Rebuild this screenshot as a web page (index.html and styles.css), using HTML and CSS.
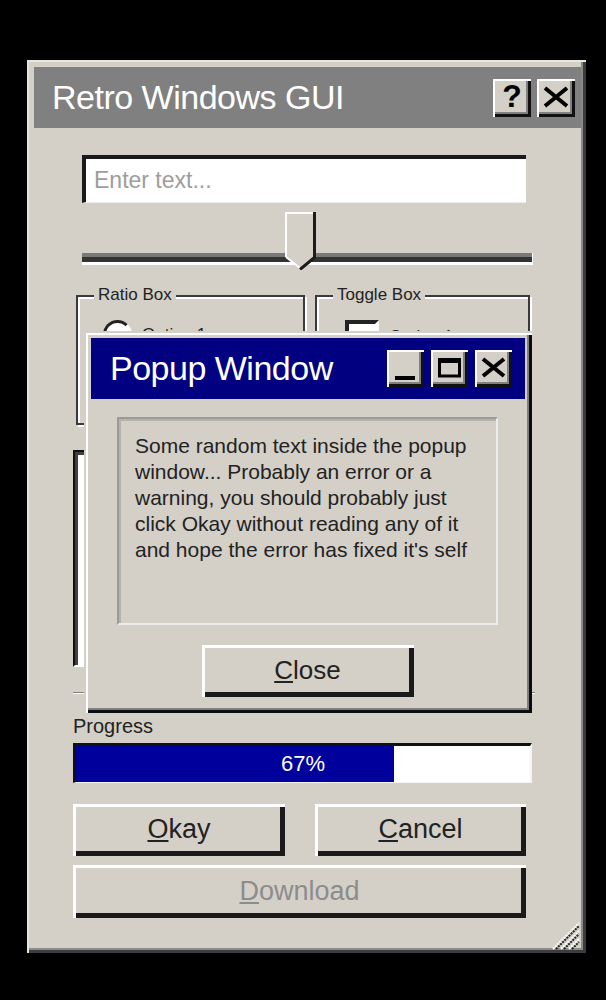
FILE: index.html
```html
<!DOCTYPE html>
<html lang="en">
<head>
    <meta charset="UTF-8">
    <meta name="viewport" content="width=device-width, initial-scale=1.0">
    <title>Retro Windows GUI</title>
    <link rel="stylesheet" href="styles.css">
</head>
<body>
    <!-- main window -->
    <div class="window main-window">
        <div class="title-bar inactive">
            <span class="title-text">Retro Windows GUI</span>
            <div class="title-buttons">
                <button class="tb-btn help">?</button>
                <button class="tb-btn">
                    <svg width="38" height="38" viewBox="0 0 38 38">
                        <path d="M8 9 L30 27 M30 9 L8 27" stroke="#000" stroke-width="4"/>
                    </svg>
                </button>
            </div>
        </div>

        <div class="window-body">
            <input class="text-field" type="text" placeholder="Enter text...">

            <div class="slider">
                <div class="slider-track"></div>
                <svg class="slider-thumb" width="32" height="58" viewBox="0 0 32 58">
                    <polygon points="1,1 29,1 29,45 15,57 1,45" fill="#d4d0c8"/>
                    <polyline points="1,45 1,1 28,1" stroke="#fff" stroke-width="2" fill="none"/>
                    <line x1="1" y1="45" x2="15" y2="56" stroke="#fff" stroke-width="2"/>
                    <polyline points="29.5,0 29.5,45.5 15,57.5" stroke="#1c1c1c" stroke-width="3" fill="none"/>
                </svg>
            </div>

            <div class="groups">
                <div class="group-box ratio">
                    <span class="legend">Ratio Box</span>
                    <label class="option"><span class="radio"></span>Option 1</label>
                </div>
                <div class="group-box toggle">
                    <span class="legend">Toggle Box</span>
                    <label class="option"><span class="checkbox"></span>Option 1</label>
                </div>
            </div>

            <div class="text-area"></div>

            <hr class="separator">

            <div class="progress-label">Progress</div>
            <div class="progress">
                <div class="progress-fill" style="width: 70%"></div>
                <span class="progress-value">67%</span>
            </div>

            <div class="button-row">
                <button class="btn"><u>O</u>kay</button>
                <button class="btn"><u>C</u>ancel</button>
            </div>
            <button class="btn wide disabled"><u>D</u>ownload</button>
        </div>

        <svg class="resize-grip" width="28" height="29" viewBox="0 0 28 29">
            <path d="M1 28 L27 2 M9 28 L27 10 M17 28 L27 18" stroke="#fff" stroke-width="2" stroke-dasharray="2 1"/>
            <path d="M4 28 L27 5 M12 28 L27 13 M20 28 L27 21" stroke="#222" stroke-width="2" stroke-dasharray="2 1"/>
        </svg>

        <!-- popup dialog -->
        <div class="window popup">
            <div class="title-bar active">
                <span class="title-text">Popup Window</span>
                <div class="title-buttons">
                    <button class="tb-btn small">
                        <svg width="37" height="37" viewBox="0 0 37 37">
                            <rect x="8" y="26" width="20" height="4" fill="#000"/>
                        </svg>
                    </button>
                    <button class="tb-btn small">
                        <svg width="37" height="37" viewBox="0 0 37 37">
                            <rect x="8.5" y="10" width="20" height="16" stroke="#000" stroke-width="3" fill="none"/>
                            <rect x="7" y="8" width="23" height="5" fill="#000"/>
                        </svg>
                    </button>
                    <button class="tb-btn small">
                        <svg width="37" height="37" viewBox="0 0 37 37">
                            <path d="M8 9 L29 26 M29 9 L8 26" stroke="#000" stroke-width="4"/>
                        </svg>
                    </button>
                </div>
            </div>
            <div class="popup-body">
                <div class="message">Some random text inside the popup window... Probably an error or a warning, you should probably just click Okay without reading any of it and hope the error has fixed it's self</div>
                <button class="btn close-btn"><u>C</u>lose</button>
            </div>
        </div>
    </div>
</body>
</html>
```

FILE: styles.css
```css
* {
    margin: 0;
    padding: 0;
    box-sizing: border-box;
}

html, body {
    background: #000;
}

body {
    padding: 60px 0 0 27px;
    font-family: "Liberation Sans", Arial, sans-serif;
    color: #222;
}

/* window frame */
.window {
    background: #d4d0c8;
    box-shadow: inset 2px 2px #e8e6e1, inset -3px -3px #3c3c3c, inset -5px -5px #8a8a8a;
}

.main-window {
    position: relative;
    width: 559px;
    height: 893px;
    padding: 7px 5px 0 7px;
}

.title-bar {
    display: flex;
    align-items: center;
    height: 61px;
    color: #fff;
}

.title-bar.inactive {
    background: #808080;
    padding: 0 6px 0 18px;
}

.title-bar.active {
    background: #000080;
    padding: 0 13px 0 19px;
}

.title-text {
    flex: 1;
    font-size: 34px;
    letter-spacing: -0.5px;
    white-space: nowrap;
}

.title-buttons {
    display: flex;
    gap: 6px;
}

.tb-btn {
    width: 38px;
    height: 38px;
    display: flex;
    align-items: center;
    justify-content: center;
    border: none;
    background: #d4d0c8;
    box-shadow: inset 2px 2px #fff, inset -3px -3px #111, inset -5px -5px #808080;
    color: #000;
}

.tb-btn.small {
    width: 37px;
    height: 37px;
}

.popup .title-buttons {
    gap: 7px;
}

.tb-btn.help {
    font-family: "Liberation Sans", Arial, sans-serif;
    font-weight: bold;
    font-size: 32px;
    line-height: 1;
    padding-bottom: 3px;
}

.window-body {
    padding: 27px 49px 0 39px;
}

/* text input */
.text-field {
    display: block;
    width: 444px;
    height: 48px;
    margin-left: 9px;
    padding: 0 8px;
    border: none;
    border-top: 4px solid #1a1a1a;
    border-left: 4px solid #1a1a1a;
    border-bottom: 1px solid #eee;
    background: #fff;
    font-family: inherit;
    font-size: 23px;
    outline: none;
}

.text-field::placeholder {
    color: #9d9d9d;
}

/* slider */
.slider {
    position: relative;
    height: 56px;
    margin: 9px 0 0 9px;
    padding-top: 41px;
}

.slider-track {
    height: 12px;
    border-top: 4px solid #7a7a7a;
    border-bottom: 3px solid #fff;
    background: #333;
    box-shadow: 1px 0 #fff;
}

.slider-thumb {
    position: absolute;
    left: 203px;
    top: 0;
}

/* group boxes */
.groups {
    display: flex;
    gap: 10px;
    height: 130px;
    margin: 27px 0 0 3px;
}

.group-box {
    border: 2px solid #3a3a3a;
    box-shadow: inset 2px 2px #fff, 2px 2px #fff;
    height: 130px;
    padding-left: 16px;
}

.group-box.ratio {
    width: 229px;
}

.group-box.toggle {
    width: 215px;
}

.legend {
    display: inline-block;
    margin-top: -12px;
    padding: 0 4px;
    background: #d4d0c8;
    font-size: 17px;
    line-height: 20px;
    vertical-align: top;
}

.option {
    display: flex;
    align-items: center;
    gap: 10px;
    margin: 5px 0 0 9px;
    font-size: 17px;
}

.radio {
    width: 29px;
    height: 29px;
    border-radius: 50%;
    border: 3px solid;
    border-color: #222 #fff #fff #222;
    background: #fff;
}

.toggle .option {
    margin-left: 12px;
}

.checkbox {
    width: 34px;
    height: 34px;
    border: 4px solid;
    border-color: #222 #fff #fff #222;
    background: #fff;
}

/* sunken list area */
.text-area {
    height: 217px;
    margin-top: 25px;
    border: 2px solid;
    border-color: #111 #fff #fff #111;
    background: #fff;
    box-shadow: inset 3px 3px #404040;
}

.separator {
    height: 2px;
    margin-top: 25px;
    border: none;
    border-top: 1px solid #808080;
    border-bottom: 1px solid #fff;
    width: 462px;
}

.progress-label {
    margin-top: 20px;
    height: 24px;
    font-size: 20px;
    line-height: 24px;
}

.progress {
    display: grid;
    height: 40px;
    margin-top: 5px;
    border-top: 3px solid #111;
    border-left: 3px solid #111;
    border-right: 2px solid #f4f4f4;
    border-bottom: 1px solid #f4f4f4;
    background: #fff;
}

.progress-fill,
.progress-value {
    grid-area: 1 / 1;
}

.progress-fill {
    background: #00009c;
}

.progress-value {
    place-self: center;
    color: #fff;
    font-size: 22px;
}

/* push buttons */
.btn {
    display: flex;
    align-items: center;
    justify-content: center;
    height: 52px;
    border: none;
    background: #d4d0c8;
    box-shadow: inset 3px 3px #fff, inset -5px -5px #1a1a1a;
    font-family: inherit;
    font-size: 27px;
    color: #222;
    padding-bottom: 1px;
}

.button-row {
    display: grid;
    grid-template-columns: 212px 211px;
    gap: 30px;
    margin-top: 21px;
}

.btn.wide {
    width: 453px;
    height: 53px;
    margin-top: 9px;
}

.btn.disabled {
    color: #8c8c8c;
}

.resize-grip {
    position: absolute;
    right: 6px;
    bottom: 3px;
}

/* popup dialog */
.popup {
    position: absolute;
    left: 57px;
    top: 271px;
    width: 448px;
    height: 382px;
    padding: 7px 7px 0 7px;
    box-shadow: inset 2px 2px #d4d0c8, inset 4px 4px #fff, inset -3px -3px #0c0c0c, inset -5px -5px #808080;
}

.popup-body {
    padding: 18px 27px 0 26px;
}

.message {
    height: 208px;
    padding: 14px 8px 0 16px;
    border: 2px solid;
    border-color: #9a9a9a #ececec #ececec #9a9a9a;
    box-shadow: inset 2px 2px #b6b3ad;
    font-size: 21px;
    line-height: 26px;
    color: #222;
}

.close-btn {
    width: 212px;
    margin: 20px auto 0;
    font-size: 26px;
}
```
